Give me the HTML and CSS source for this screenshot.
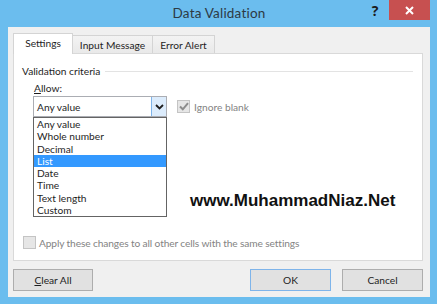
FILE: index.html
```html
<!DOCTYPE html>
<html>
<head>
  <meta charset="utf-8">
  <title>Data Validation</title>
  <link rel="stylesheet" href="styles.css">
</head>
<body>
  <div class="window">
    <div class="titlebar">
      <span></span>
      <span class="title">Data Validation</span>
      <span class="caption-buttons">
        <span class="help">?</span>
        <span class="close">
          <svg width="9" height="9" viewBox="0 0 9 9"><path d="M1 1 L8 8 M8 1 L1 8" stroke="#fff" stroke-width="2"/></svg>
        </span>
      </span>
    </div>

    <div class="client">
      <div class="tabs">
        <span class="tab active">Settings</span>
        <span class="tab">Input Message</span>
        <span class="tab">Error Alert</span>
      </div>

      <div class="panel">
        <div class="group-title"><span>Validation criteria</span><i class="rule"></i></div>

        <div class="criteria">
          <div class="field">
            <label class="field-label"><u>A</u>llow:</label>
            <div class="combo">
              <div class="combo-box">
                <span class="combo-value">Any value</span>
                <span class="combo-arrow">
                  <svg width="9" height="6" viewBox="0 0 9 6"><path d="M1 1 L4.5 4.5 L8 1" fill="none" stroke="#1e1e1e" stroke-width="1.8"/></svg>
                </span>
              </div>
              <ul class="dropdown">
                <li>Any value</li>
                <li>Whole number</li>
                <li>Decimal</li>
                <li class="selected">List</li>
                <li>Date</li>
                <li>Time</li>
                <li>Text length</li>
                <li>Custom</li>
              </ul>
            </div>
          </div>
          <label class="check disabled">
            <span class="box">
              <svg width="10" height="9" viewBox="0 0 10 9"><path d="M1 4.5 L3.8 7.3 L9 1.2" fill="none" stroke="#8c8c8c" stroke-width="2"/></svg>
            </span>
            Ignore blank
          </label>
        </div>

        <div class="watermark">www.MuhammadNiaz.Net</div>

        <label class="check disabled apply">
          <span class="box"></span>
          Apply these changes to all other cells with the same settings
        </label>
      </div>

      <div class="buttons">
        <button class="btn"><u>C</u>lear All</button>
        <span class="spacer"></span>
        <button class="btn default">OK</button>
        <button class="btn">Cancel</button>
      </div>
    </div>
  </div>
</body>
</html>
```

FILE: styles.css
```css
* { box-sizing: border-box; }

html, body { margin: 0; padding: 0; }

body {
  font-family: Lato, "Open Sans", sans-serif;
  font-size: 10.2px;
  color: #1e1e1e;
}

.window {
  width: 437px;
  height: 304px;
  background: #6bbdee;
  padding: 0 7px 7px 8px;
  display: flex;
  flex-direction: column;
}

/* title bar */
.titlebar {
  height: 27px;
  display: grid;
  grid-template-columns: 1fr auto 1fr;
  align-items: start;
}
.title {
  font-size: 13.5px;
  color: #2d3a44;
  line-height: 27px;
  letter-spacing: 0.2px;
}
.caption-buttons { justify-self: end; display: flex; }
.help {
  width: 28px;
  height: 20px;
  line-height: 21px;
  text-align: center;
  font-family: "Open Sans", sans-serif;
  font-weight: bold;
  font-size: 14px;
  color: #1b1b1b;
}
.close {
  width: 41px;
  height: 20px;
  background: #c75050;
  display: flex;
  align-items: center;
  justify-content: center;
}

/* client */
.client {
  flex: 1;
  background: #f0f0f0;
  padding: 6px 7px 0 5px;
  display: flex;
  flex-direction: column;
}

.tabs { display: flex; align-items: flex-end; height: 20px; position: relative; z-index: 1; }
.tab {
  height: 18px;
  line-height: 18px;
  border: 1px solid #d4d4d4;
  border-bottom: none;
  border-left: none;
  background: linear-gradient(#f3f3f3, #e9e9e9);
  color: #1e1e1e;
  text-align: center;
}
.tab.active {
  height: 21px;
  margin-bottom: -1px;
  width: 60px;
  line-height: 19px;
  background: #fff;
  border-left: 1px solid #d4d4d4;
}
.tab:nth-child(2) { width: 80px; }
.tab:nth-child(3) { width: 62px; }

.panel {
  height: 208px;
  background: #fff;
  border: 1px solid #d9d9d9;
  display: flex;
  flex-direction: column;
}

.group-title {
  margin-top: 10px;
  padding: 0 9px 0 8px;
  display: flex;
  align-items: center;
  gap: 5px;
  line-height: 14px;
}
.rule { flex: 1; height: 1px; background: #e3e3e3; }

.criteria {
  padding-left: 19px;
  display: flex;
  align-items: flex-end;
  gap: 10px;
}
.field-label { display: block; margin: 3px 0 1px 1px; line-height: 14px; }

.combo { position: relative; width: 134px; }
.combo-box {
  height: 21px;
  border: 1px solid #abadb3;
  display: flex;
  align-items: center;
  justify-content: space-between;
}
.combo-value { padding-left: 3px; }
.combo-arrow {
  width: 15px;
  height: 19px;
  background: #dcecfc;
  border-left: 1px solid #7eb4ea;
  display: flex;
  align-items: center;
  justify-content: center;
}

.dropdown {
  position: absolute;
  top: 100%;
  left: 0;
  width: 134px;
  margin: 0;
  padding: 0;
  list-style: none;
  background: #fff;
  border: 1px solid #646464;
  z-index: 2;
}
.dropdown li { height: 12.25px; line-height: 12.25px; padding-left: 3px; }
.dropdown li.selected { background: #3399ff; color: #fff; }

.check { display: flex; align-items: center; gap: 4px; color: #838383; }
.criteria .check { height: 21px; }
.box {
  width: 13px;
  height: 13px;
  border: 1px solid #c4c4c4;
  background: #e6e6e6;
  display: flex;
  align-items: center;
  justify-content: center;
}

.watermark {
  margin: 74px 0 0 176px;
  font-family: "Liberation Sans", Arial, sans-serif;
  font-weight: bold;
  font-size: 17px;
  line-height: 20px;
  color: #111;
}

.apply { margin: auto 0 11px 9px; gap: 3px; letter-spacing: -0.12px; }

/* buttons */
.buttons {
  margin-top: 8px;
  display: flex;
  gap: 11px;
}
.spacer { flex: 1; }
.btn {
  width: 81px;
  height: 22px;
  font: inherit;
  color: #1e1e1e;
  background: #e1e1e1;
  border: 1px solid #adadad;
  padding: 0;
}
.btn:first-child { width: 80px; }
.btn.default { border-color: #7eb4ea; }
```
